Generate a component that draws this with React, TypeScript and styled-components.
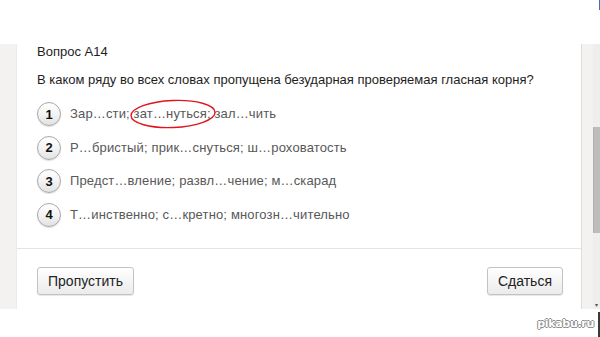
import React from "react";
import styled, { createGlobalStyle } from "styled-components";

const GlobalStyle = createGlobalStyle`
  html, body { margin: 0; padding: 0; background: #ffffff; }
  body { font-family: "Liberation Sans", Arial, sans-serif; }
  * { box-sizing: border-box; }
`;

const Page = styled.div`
  width: 600px;
  height: 337px;
  display: flex;
  flex-direction: column;
  overflow: hidden;
  background: #ffffff;
`;

const TopBand = styled.div`
  height: 44px;
  display: flex;
  justify-content: flex-end;
  background: #ffffff;
`;

const EdgeMark = styled.div<{ $color: string; $h: number }>`
  width: 1px;
  height: ${(p) => p.$h}px;
  background: ${(p) => p.$color};
`;

const Body = styled.div`
  height: 265px;
  display: flex;
  background: #f3f2f0;
`;

const Gutter = styled.div`
  width: 16px;
  flex: none;
`;

const Card = styled.div`
  flex: 1;
  display: flex;
  flex-direction: column;
  background: #ffffff;
  border-left: 1px solid #ebebeb;
  border-right: 1px solid #dddddd;
`;

const Content = styled.div`
  padding: 0 18px 0 20px;
  display: flex;
  flex-direction: column;
`;

const Title = styled.div`
  font-size: 13px;
  line-height: 16px;
  color: #1e1e1e;
`;

const Question = styled.div`
  margin-top: 12px;
  font-size: 13px;
  line-height: 16px;
  color: #1e1e1e;
`;

const Options = styled.div`
  margin-top: 14px;
  display: flex;
  flex-direction: column;
  gap: 9.5px;
`;

const Option = styled.div`
  height: 24px;
  display: flex;
  align-items: center;
  gap: 9px;
`;

const Num = styled.div`
  width: 24px;
  height: 24px;
  flex: none;
  border-radius: 50%;
  border: 1px solid #a8a8a8;
  background: linear-gradient(#ffffff 0%, #f4f4f4 50%, #e2e2e2 100%);
  box-shadow: 0 1px 1px rgba(0, 0, 0, 0.12);
  display: flex;
  align-items: center;
  justify-content: center;
  font-size: 13px;
  font-weight: bold;
  color: #111;
`;

const OptionText = styled.div`
  font-size: 13px;
  line-height: 16px;
  letter-spacing: 0.15px;
  color: #585858;
  white-space: nowrap;
`;

const Marked = styled.span`
  position: relative;
`;

const Ring = styled.svg`
  position: absolute;
  left: -3px;
  top: -6px;
  width: calc(100% + 7px);
  height: 28px;
  overflow: visible;
  pointer-events: none;
`;

const Divider = styled.div`
  margin-top: 21px;
  height: 1px;
  background: #e4e4e4;
`;

const Footer = styled.div`
  display: flex;
  justify-content: space-between;
  padding: 18px 18px 0 20px;
`;

const Button = styled.button`
  height: 28px;
  padding: 0 10px;
  border: 1px solid #c3c3c3;
  border-radius: 3px;
  background: linear-gradient(#ffffff, #ebebeb);
  box-shadow: 0 1px 1px rgba(0, 0, 0, 0.1);
  font-family: "Liberation Sans", Arial, sans-serif;
  font-size: 14px;
  color: #222;
`;

const ScrollArea = styled.div`
  width: 18px;
  flex: none;
  display: flex;
  justify-content: flex-end;
`;

const Track = styled.div`
  width: 7px;
  display: flex;
  flex-direction: column;
  align-items: stretch;
  background: #eeeeee;
  padding-top: 83px;
`;

const Thumb = styled.div`
  height: 106px;
  background: #bdbdbd;
  border-left: 1px solid #b0b0b0;
`;

const Arrow = styled.div`
  margin-top: auto;
  margin-bottom: 1px;
  font-size: 6px;
  line-height: 6px;
  color: #555;
  text-align: center;
`;

const BottomBand = styled.div`
  flex: 1;
  display: flex;
  justify-content: flex-end;
  align-items: flex-end;
  padding-top: 3px;
`;

const Watermark = styled.div`
  font-family: "DejaVu Sans", sans-serif;
  font-size: 11px;
  font-weight: bold;
  letter-spacing: -0.3px;
  color: #ffffff;
  text-shadow: 1px 0 0 #8a8a8a, -1px 0 0 #8a8a8a, 0 1px 0 #8a8a8a,
    0 -1px 0 #8a8a8a;
  margin: 0 4px 7px 0;
`;

const EdgeLine = styled.div`
  width: 2px;
  align-self: stretch;
  background: #3a3a3a;
`;

const options: { n: number; parts: React.ReactNode }[] = [
  {
    n: 1,
    parts: (
      <>
        Зар…сти;{" "}
        <Marked>
          зат…нуться;
          <Ring viewBox="0 0 100 28" preserveAspectRatio="none">
            <ellipse
              cx="50"
              cy="14"
              rx="50"
              ry="13.5"
              fill="none"
              stroke="#e0141e"
              strokeWidth="1.4"
              vectorEffect="non-scaling-stroke"
              transform="rotate(-2 50 14)"
            />
          </Ring>
        </Marked>{" "}
        зал…чить
      </>
    ),
  },
  { n: 2, parts: "Р…бристый; прик…снуться; ш…роховатость" },
  { n: 3, parts: "Предст…вление; развл…чение; м…скарад" },
  { n: 4, parts: "Т…инственно; с…кретно; многозн…чительно" },
];

export default function App() {
  return (
    <>
      <GlobalStyle />
      <Page>
        <TopBand>
          <EdgeMark $color="#3a6fc4" $h={10} />
        </TopBand>
        <Body>
          <Gutter />
          <Card>
            <Content>
              <Title>Вопрос A14</Title>
              <Question>
                В каком ряду во всех словах пропущена безударная проверяемая
                гласная корня?
              </Question>
              <Options>
                {options.map((o) => (
                  <Option key={o.n}>
                    <Num>{o.n}</Num>
                    <OptionText>{o.parts}</OptionText>
                  </Option>
                ))}
              </Options>
            </Content>
            <Divider />
            <Footer>
              <Button>Пропустить</Button>
              <Button>Сдаться</Button>
            </Footer>
          </Card>
          <ScrollArea>
            <Track>
              <Thumb />
              <Arrow>▾</Arrow>
            </Track>
          </ScrollArea>
        </Body>
        <BottomBand>
          <Watermark>pikabu.ru</Watermark>
          <EdgeLine />
        </BottomBand>
      </Page>
    </>
  );
}
